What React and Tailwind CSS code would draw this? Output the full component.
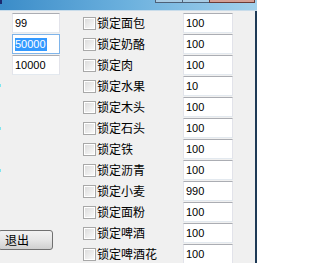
import React from "react";

const rows = [
  ["锁定面包", "100"],
  ["锁定奶酪", "100"],
  ["锁定肉", "100"],
  ["锁定水果", "10"],
  ["锁定木头", "100"],
  ["锁定石头", "100"],
  ["锁定铁", "100"],
  ["锁定沥青", "100"],
  ["锁定小麦", "990"],
  ["锁定面粉", "100"],
  ["锁定啤酒", "100"],
  ["锁定啤酒花", "100"],
];

const numFont = { fontFamily: '"Liberation Sans", Arial, sans-serif' };
const cjkFont = { fontFamily: '"Noto Sans CJK SC", "Noto Sans", sans-serif' };

function Edit({ children, focused }) {
  return (
    <div
      className={
        "h-[20px] bg-white border flex items-center pl-[2px] text-[11px] text-black leading-none " +
        (focused
          ? "border-[#7eb4ea]"
          : "border-[#e2e3ea] border-t-[#abadb3] border-b-[#e3e9ef]")
      }
      style={numFont}
    >
      {children}
    </div>
  );
}

function Check() {
  return (
    <div className="w-[13px] h-[13px] border border-[#a8a8a8] bg-white p-[1px] shrink-0">
      <div className="w-full h-full bg-gradient-to-br from-[#dddddd] to-[#f9f9f9]" />
    </div>
  );
}

export default function App() {
  return (
    <div className="w-[257px] h-[263px] overflow-hidden bg-[#f0f0f0] flex flex-col">
      {/* title bar */}
      <div className="h-[10px] w-[257px] shrink-0 bg-gradient-to-r from-[#3a8cc8] via-[#6cb1de] to-[#a3d1ec] flex">
        <div className="w-[2px] h-[4px] bg-[#1c2a6e]" />
        <div className="flex-1" />
        <div className="flex h-[3px] mr-[2px]">
          <div className="w-[27px] h-full border-b border-l border-[#4d6178] bg-[#a9cce4]" />
          <div className="w-[27px] h-full border-b border-l border-[#4d6178] bg-[#a9cce4]" />
          <div className="w-[46px] h-full border-b border-l border-r border-[#6b3b36] bg-[#d4a096]" />
        </div>
      </div>
      <div className="h-[1px] w-[257px] shrink-0 bg-[#c9dcea]" />

      {/* content */}
      <div className="h-[252px] w-[257px] flex">
        {/* left column */}
        <div className="w-[61px] shrink-0 flex flex-col pt-[2px] relative">
          <div className="ml-[12px] w-[48px] flex flex-col gap-[1px]">
            <Edit>99</Edit>
            <Edit focused>
              <span className="bg-[#3399ff] text-white h-[13px] leading-[13px] pr-[1px]">50000</span>
            </Edit>
            <Edit>10000</Edit>
          </div>
          <div
            className="mt-[155px] -ml-[2px] w-[55px] h-[20px] border border-[#707070] rounded-[3px] bg-gradient-to-b from-[#f2f2f2] via-[#e6e6e6] to-[#cfcfcf] flex items-center pl-[6px] text-[12px] text-black"
            style={cjkFont}
          >
            退出
          </div>
          {/* small cyan marks at left edge */}
          <div className="absolute left-0 top-[73px] w-[1px] h-[3px] bg-[#7fe6f0]" />
          <div className="absolute left-0 top-[116px] w-[1px] h-[3px] bg-[#7fe6f0]" />
          <div className="absolute left-0 top-[158px] w-[1px] h-[3px] bg-[#7fe6f0]" />
        </div>

        {/* right columns */}
        <div className="ml-[22px] w-[150px] shrink-0 flex flex-col gap-[1px] pt-[2px]">
          {rows.map(([label, val]) => (
            <div key={label} className="flex items-center h-[20px] shrink-0">
              <div className="w-[100px] flex items-center">
                <Check />
                <span className="ml-[1px] text-[12px] text-black leading-none" style={cjkFont}>
                  {label}
                </span>
              </div>
              <div className="w-[50px]">
                <Edit>{val}</Edit>
              </div>
            </div>
          ))}
        </div>
        <div className="w-[22px] shrink-0" />
        <div className="w-[2px] h-full shrink-0 bg-[#1e3a56]" />
      </div>
    </div>
  );
}
